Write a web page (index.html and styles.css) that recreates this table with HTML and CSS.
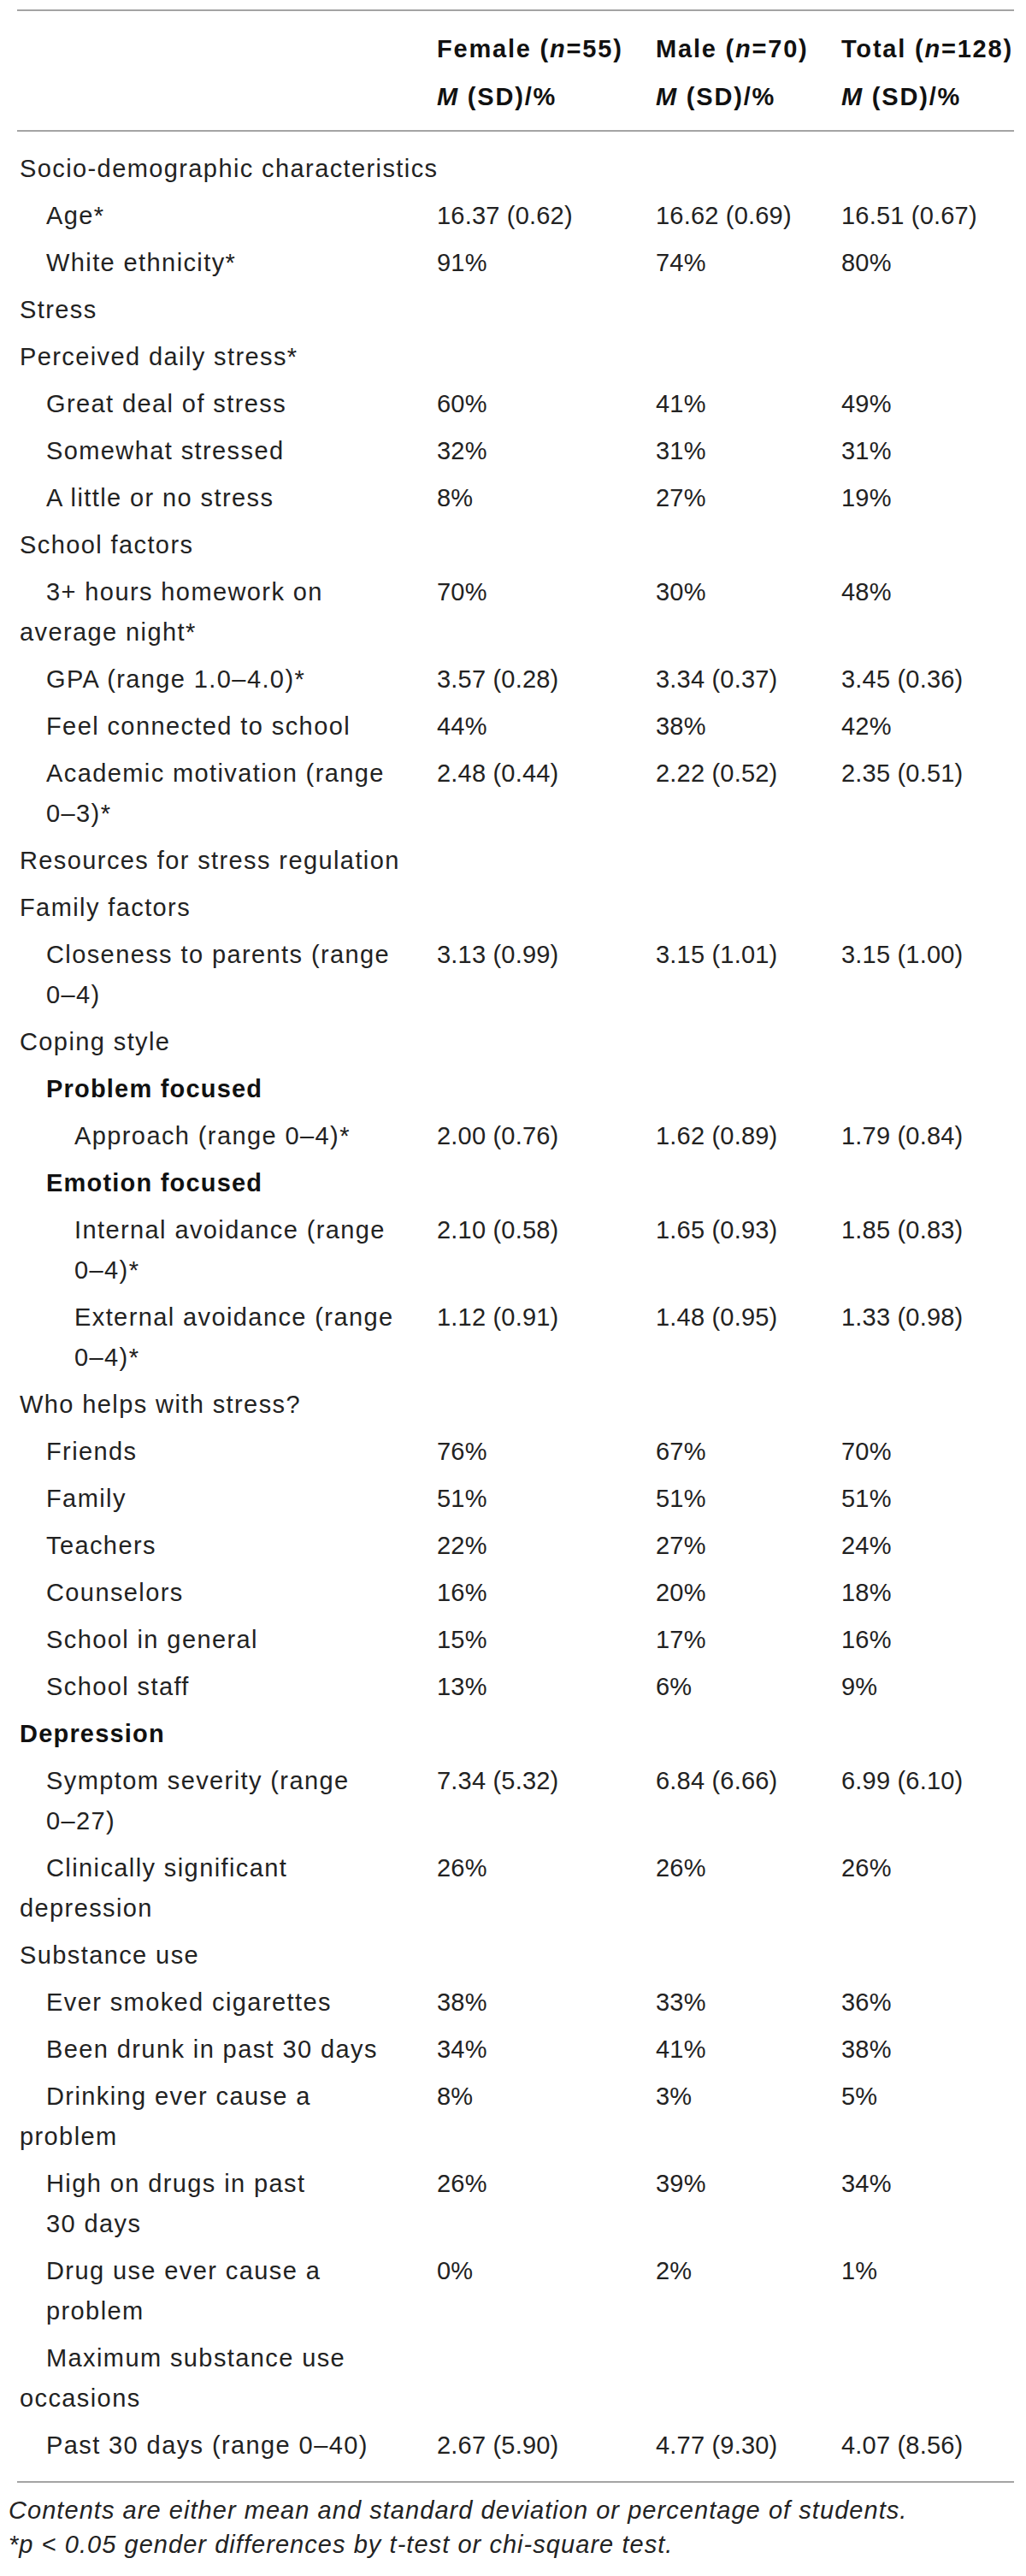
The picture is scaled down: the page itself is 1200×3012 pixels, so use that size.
FILE: index.html
```html
<!DOCTYPE html>
<html lang="en">
<head>
<meta charset="utf-8">
<title>Table</title>
<link rel="stylesheet" href="styles.css">
</head>
<body>
<div class="page">
<table class="data">
  <colgroup>
    <col class="c-label"><col class="c-f"><col class="c-m"><col class="c-t">
  </colgroup>
  <thead>
    <tr class="h1">
      <th></th>
      <th>Female (<i>n</i>=55)</th>
      <th>Male (<i>n</i>=70)</th>
      <th>Total (<i>n</i>=128)</th>
    </tr>
    <tr class="h2">
      <th></th>
      <th><i>M</i> (SD)/%</th>
      <th><i>M</i> (SD)/%</th>
      <th><i>M</i> (SD)/%</th>
    </tr>
  </thead>
  <tbody>
    <tr class="first"><td class="l0" colspan="4">Socio-demographic characteristics</td></tr>
    <tr><td class="l1">Age*</td><td>16.37 (0.62)</td><td>16.62 (0.69)</td><td>16.51 (0.67)</td></tr>
    <tr><td class="l1">White ethnicity*</td><td>91%</td><td>74%</td><td>80%</td></tr>
    <tr><td class="l0" colspan="4">Stress</td></tr>
    <tr><td class="l0" colspan="4">Perceived daily stress*</td></tr>
    <tr><td class="l1">Great deal of stress</td><td>60%</td><td>41%</td><td>49%</td></tr>
    <tr><td class="l1">Somewhat stressed</td><td>32%</td><td>31%</td><td>31%</td></tr>
    <tr><td class="l1">A little or no stress</td><td>8%</td><td>27%</td><td>19%</td></tr>
    <tr><td class="l0" colspan="4">School factors</td></tr>
    <tr><td class="l1">3+ hours homework on average night*</td><td>70%</td><td>30%</td><td>48%</td></tr>
    <tr><td class="l1">GPA (range <span class="nw">1.0–4.0)*</span></td><td>3.57 (0.28)</td><td>3.34 (0.37)</td><td>3.45 (0.36)</td></tr>
    <tr><td class="l1">Feel connected to school</td><td>44%</td><td>38%</td><td>42%</td></tr>
    <tr><td class="l1h">Academic motivation (range <span class="nw">0–3)*</span></td><td>2.48 (0.44)</td><td>2.22 (0.52)</td><td>2.35 (0.51)</td></tr>
    <tr><td class="l0" colspan="4">Resources for stress regulation</td></tr>
    <tr><td class="l0" colspan="4">Family factors</td></tr>
    <tr><td class="l1h">Closeness to parents (range <span class="nw">0–4)</span></td><td>3.13 (0.99)</td><td>3.15 (1.01)</td><td>3.15 (1.00)</td></tr>
    <tr><td class="l0" colspan="4">Coping style</td></tr>
    <tr><td class="l1h b" colspan="4">Problem focused</td></tr>
    <tr><td class="l2">Approach (range <span class="nw">0–4)*</span></td><td>2.00 (0.76)</td><td>1.62 (0.89)</td><td>1.79 (0.84)</td></tr>
    <tr><td class="l1h b" colspan="4">Emotion focused</td></tr>
    <tr><td class="l2">Internal avoidance (range <span class="nw">0–4)*</span></td><td>2.10 (0.58)</td><td>1.65 (0.93)</td><td>1.85 (0.83)</td></tr>
    <tr><td class="l2">External avoidance (range <span class="nw">0–4)*</span></td><td>1.12 (0.91)</td><td>1.48 (0.95)</td><td>1.33 (0.98)</td></tr>
    <tr><td class="l0" colspan="4">Who helps with stress?</td></tr>
    <tr><td class="l1">Friends</td><td>76%</td><td>67%</td><td>70%</td></tr>
    <tr><td class="l1">Family</td><td>51%</td><td>51%</td><td>51%</td></tr>
    <tr><td class="l1">Teachers</td><td>22%</td><td>27%</td><td>24%</td></tr>
    <tr><td class="l1">Counselors</td><td>16%</td><td>20%</td><td>18%</td></tr>
    <tr><td class="l1">School in general</td><td>15%</td><td>17%</td><td>16%</td></tr>
    <tr><td class="l1">School staff</td><td>13%</td><td>6%</td><td>9%</td></tr>
    <tr><td class="l0 b" colspan="4">Depression</td></tr>
    <tr><td class="l1h">Symptom severity (range <span class="nw">0–27)</span></td><td>7.34 (5.32)</td><td>6.84 (6.66)</td><td>6.99 (6.10)</td></tr>
    <tr><td class="l1">Clinically significant depression</td><td>26%</td><td>26%</td><td>26%</td></tr>
    <tr><td class="l0" colspan="4">Substance use</td></tr>
    <tr><td class="l1">Ever smoked cigarettes</td><td>38%</td><td>33%</td><td>36%</td></tr>
    <tr><td class="l1">Been drunk in past 30 days</td><td>34%</td><td>41%</td><td>38%</td></tr>
    <tr><td class="l1">Drinking ever cause a problem</td><td>8%</td><td>3%</td><td>5%</td></tr>
    <tr><td class="l1h">High on drugs in past 30&nbsp;days</td><td>26%</td><td>39%</td><td>34%</td></tr>
    <tr><td class="l1h">Drug use ever cause a problem</td><td>0%</td><td>2%</td><td>1%</td></tr>
    <tr><td class="l1">Maximum substance use occasions</td><td></td><td></td><td></td></tr>
    <tr class="last"><td class="l1">Past 30 days (range <span class="nw">0–40)</span></td><td>2.67 (5.90)</td><td>4.77 (9.30)</td><td>4.07 (8.56)</td></tr>
  </tbody>
</table>
<div class="notes">
  <p>Contents are either mean and standard deviation or percentage of students.</p>
  <p>*p &lt; 0.05 gender differences by t-test or chi-square test.</p>
</div>
</div>
</body>
</html>
```

FILE: styles.css
```css
html, body {
  margin: 0;
  padding: 0;
  background: #ffffff;
}

body {
  font-family: "Liberation Sans", Arial, Helvetica, sans-serif;
  color: #222222;
}

.page {
  padding: 11px 14px 0 10px;
}

.data {
  margin-left: 10px;
  width: 1166px;
  table-layout: fixed;
  border-collapse: collapse;
  border-top: 2px solid #a4a4a4;
  border-bottom: 2px solid #a4a4a4;
  font-size: 29px;
  letter-spacing: 0.2px;
}

.c-label { width: 491px; }
.c-f { width: 256px; }
.c-m { width: 217px; }
.c-t { width: 202px; }

.data th {
  font-weight: 700;
  color: #111;
  text-align: left;
  line-height: 56px;
  padding: 0;
  white-space: nowrap;
  letter-spacing: 1.8px;
}

.data .h1 th { padding-top: 16px; }
.data .h2 th { padding-bottom: 11px; }

.data thead { border-bottom: 2px solid #a4a4a4; }

.data td {
  vertical-align: top;
  line-height: 47px;
  padding: 4px 0;
  text-align: left;
}

.data td:first-child {
  padding-right: 42px;
  letter-spacing: 1.4px;
}

.nw { white-space: nowrap; }

.data tr.first td { padding-top: 20px; }
.data tr.last td { padding-bottom: 18px; }

.data td.l0 { padding-left: 3px; }
.data td.l1 { padding-left: 3px; text-indent: 31px; }
.data td.l1h { padding-left: 34px; }
.data td.l2 { padding-left: 67px; }

.data td.b { font-weight: 700; color: #111; letter-spacing: 1.2px; }

.notes {
  margin-top: 12px;
  font-size: 29px;
  font-style: italic;
  line-height: 40px;
  letter-spacing: 1.05px;
}

.notes p {
  margin: 0;
}
```
